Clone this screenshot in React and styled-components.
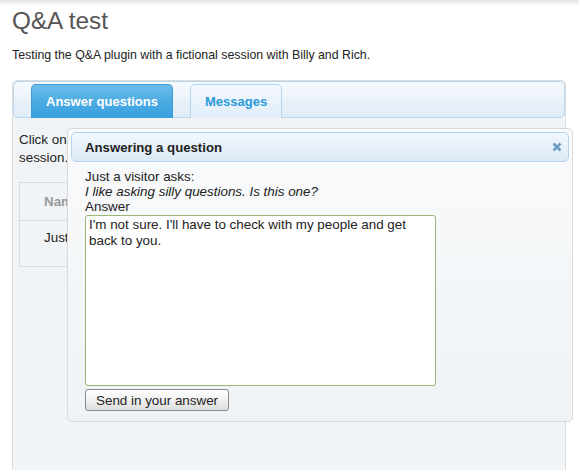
import React from "react";
import styled, { createGlobalStyle } from "styled-components";

const GlobalStyle = createGlobalStyle`
	body {
		margin: 0;
		background: #fff;
		font-family: "Liberation Sans", Arial, sans-serif;
		color: #222;
		overflow: hidden;
	}
`;

const Page = styled.div`
	position: relative;
	height: 470px;
	overflow: hidden;
	padding: 0 13px 0 12px;
`;

const TopShade = styled.div`
	height: 6px;
	margin: 0 -13px 0 -12px;
	background: linear-gradient(#e6e6e6, #fff);
`;

const Title = styled.h1`
	margin: 0;
	padding-top: 1px;
	font-size: 24.3px;
	font-weight: normal;
	line-height: 28px;
	color: #555;
`;

const Intro = styled.p`
	margin: 12px 0 0;
	font-size: 12.35px;
	line-height: 16px;
	color: #222;
`;

const Tabs = styled.div`
	margin-top: 17px;
	border: 1px solid #dcdcdc;
	border-radius: 5px;
	background: #f0f4f7;
	height: 420px;
`;

const TabList = styled.ul`
	display: flex;
	align-items: flex-end;
	gap: 17px;
	margin: 0;
	padding: 3px 17px 0;
	height: 32px;
	list-style: none;
	border: 1px solid #b9d7f0;
	border-radius: 5px;
	background: linear-gradient(#f6f9fc, #dfecf7);
`;

const Tab = styled.li`
	display: flex;
	align-items: center;
	height: 32px;
	margin-bottom: -1px;
	padding: 0 14px 1px;
	font-size: 13px;
	font-weight: bold;
	border: 1px solid ${(p) => (p.$active ? "#3c9ad6" : "#b4d5ef")};
	border-bottom: none;
	border-radius: 5px 5px 0 0;
	color: ${(p) => (p.$active ? "#fff" : "#2b9ad9")};
	background: ${(p) =>
		p.$active
			? "linear-gradient(#6cbce9, #49aae2 55%, #3aa0de)"
			: "linear-gradient(#f4f8fc, #e0eef9)"};
`;

const Panel = styled.div`
	padding: 13px 6px;
`;

const PanelText = styled.p`
	margin: 0;
	font-size: 13.4px;
	line-height: 18px;
`;

const Table = styled.table`
	margin-top: 15px;
	width: 420px;
	border-collapse: collapse;
	border: 1px solid #dcdcdc;
	font-size: 13.4px;
`;

const HeadCell = styled.th`
	height: 37px;
	padding: 0 24px;
	text-align: left;
	color: #999;
	font-weight: bold;
	border-bottom: 1px solid #dcdcdc;
`;

const Cell = styled.td`
	height: 46px;
	padding: 0 24px;
	vertical-align: top;
	padding-top: 9px;
	box-sizing: border-box;
`;

const Dialog = styled.div`
	position: absolute;
	left: 67px;
	top: 128px;
	width: 498px;
	height: 286px;
	padding: 3px;
	border: 1px solid #d8dadc;
	border-radius: 5px;
	background: linear-gradient(#f9fafb, #eff3f6);
	box-shadow: 0 0 2px rgba(0, 0, 0, 0.04);
`;

const TitleBar = styled.div`
	display: flex;
	align-items: center;
	justify-content: space-between;
	height: 28px;
	padding: 0 5px 0 13px;
	border: 1px solid #b5d5ef;
	border-radius: 5px;
	background: linear-gradient(#f2f7fc, #dbe9f6);
`;

const DialogTitle = styled.span`
	font-size: 13.2px;
	font-weight: bold;
	color: #222;
`;

const CloseButton = styled.span`
	display: flex;
	width: 12px;
	height: 12px;
	align-items: center;
	justify-content: center;
`;

const DialogBody = styled.div`
	padding: 7px 14px 0;
	font-size: 13.4px;
	line-height: 15px;
`;

const Question = styled.div`
	font-style: italic;
`;

const AnswerBox = styled.textarea`
	display: block;
	box-sizing: border-box;
	width: 351px;
	height: 171px;
	margin-top: 1px;
	padding: 1px 3px;
	border: 1px solid #9bb574;
	border-radius: 3px;
	background: #fff;
	font-family: "Liberation Sans", Arial, sans-serif;
	font-size: 13.4px;
	line-height: 16px;
	color: #222;
	resize: none;
	outline: none;
`;

const SendButton = styled.button`
	display: block;
	margin-top: 3px;
	height: 22px;
	padding: 0 10px;
	border: 1px solid #8a8a8a;
	border-radius: 3px;
	background: linear-gradient(#ffffff, #f1f1f1 50%, #dcdcdc);
	font-family: "Liberation Sans", Arial, sans-serif;
	font-size: 13.4px;
	color: #222;
`;

const CloseIcon = () => (
	<svg width="10" height="10" viewBox="0 0 10 10">
		<path d="M1.5 1.5 L8.5 8.5 M8.5 1.5 L1.5 8.5" stroke="#6f9cc7" strokeWidth="2.6" strokeLinecap="butt" />
	</svg>
);

const App = () => {
	return (
		<Page>
			<GlobalStyle />
			<TopShade />
			<Title>Q&amp;A test</Title>
			<Intro>Testing the Q&amp;A plugin with a fictional session with Billy and Rich.</Intro>
			<Tabs>
				<TabList>
					<Tab $active>Answer questions</Tab>
					<Tab>Messages</Tab>
				</TabList>
				<Panel>
					<PanelText>
						Click on a question to answer it for the people in this
						<br />
						session.
					</PanelText>
					<Table>
						<thead>
							<tr>
								<HeadCell>Name</HeadCell>
								<HeadCell>Question</HeadCell>
							</tr>
						</thead>
						<tbody>
							<tr>
								<Cell>Just a visitor</Cell>
								<Cell>I like asking silly questions. Is this one?</Cell>
							</tr>
						</tbody>
					</Table>
				</Panel>
			</Tabs>
			<Dialog>
				<TitleBar>
					<DialogTitle>Answering a question</DialogTitle>
					<CloseButton>
						<CloseIcon />
					</CloseButton>
				</TitleBar>
				<DialogBody>
					<div>Just a visitor asks:</div>
					<Question>I like asking silly questions. Is this one?</Question>
					<div>Answer</div>
					<AnswerBox
						readOnly
						value="I'm not sure. I'll have to check with my people and get back to you."
					/>
					<SendButton>Send in your answer</SendButton>
				</DialogBody>
			</Dialog>
		</Page>
	);
};

export default App;
